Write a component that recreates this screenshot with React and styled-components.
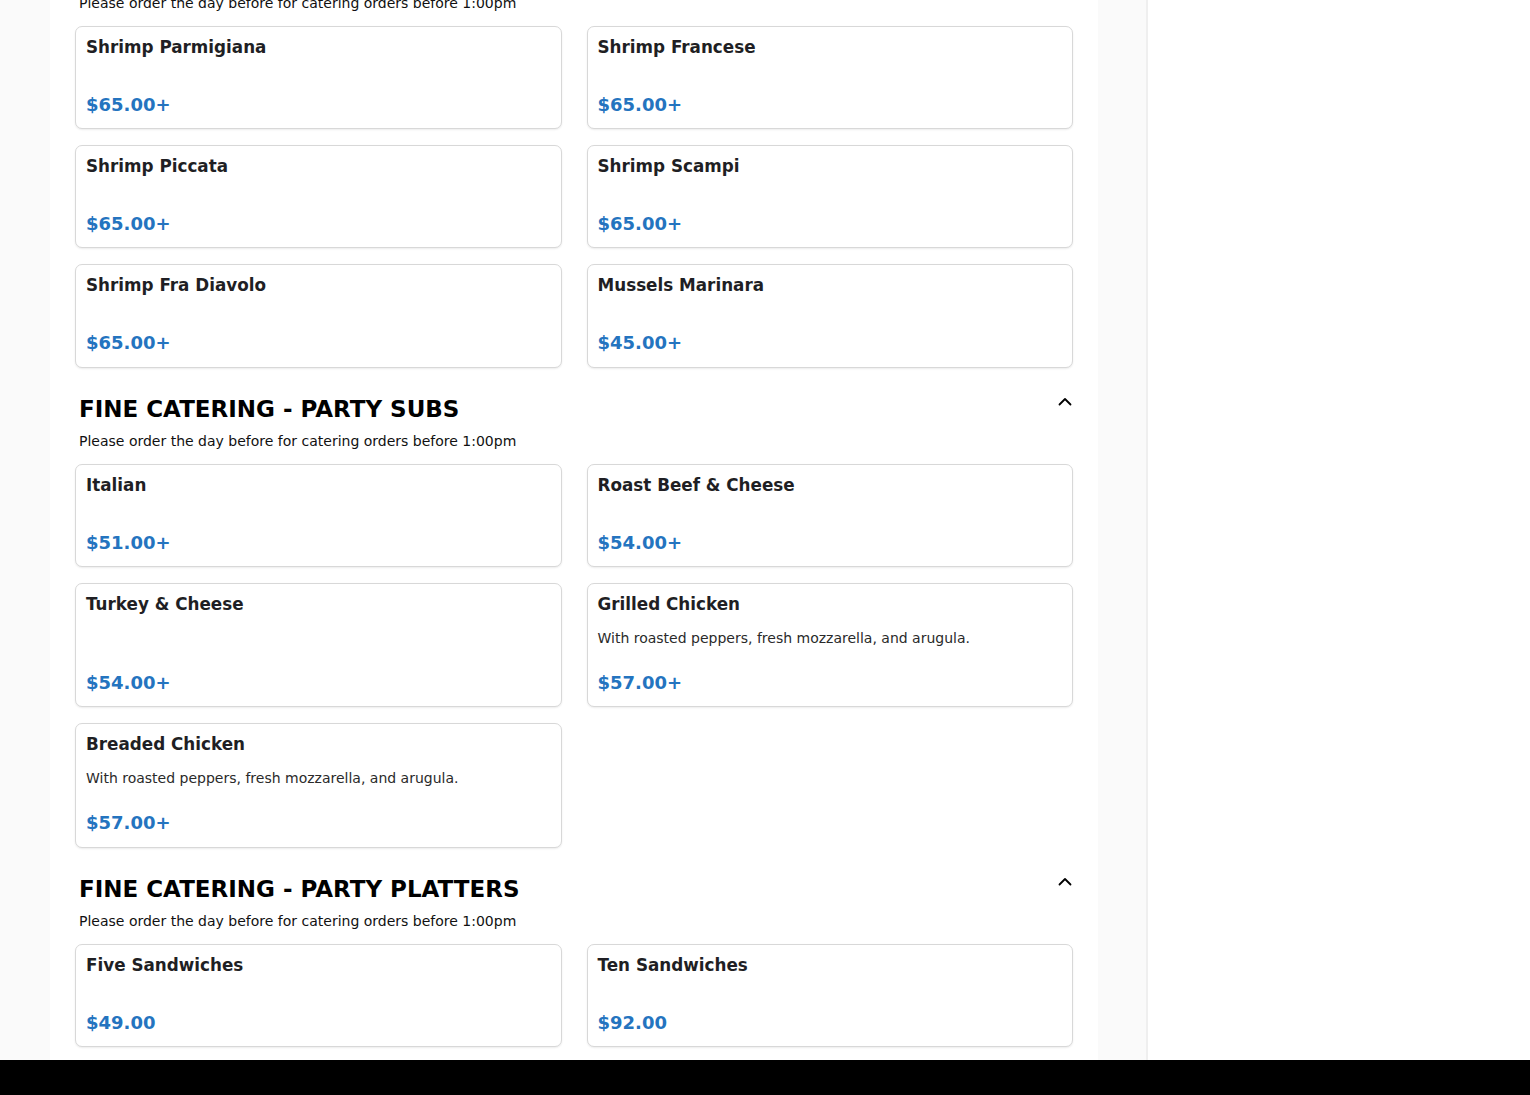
import styled, { createGlobalStyle } from 'styled-components';

const GlobalStyle = createGlobalStyle`
    * { box-sizing: border-box; }
    html, body {
        margin: 0;
        padding: 0;
        background: #fafafa;
        font-family: "DejaVu Sans", "Noto Sans", sans-serif;
        overflow: hidden;
    }
`;

const sections = [
    {
        title: 'FINE CATERING - SEAFOOD',
        hidden: true,
        items: [
            { name: 'Shrimp Parmigiana', price: '$65.00+' },
            { name: 'Shrimp Francese', price: '$65.00+' },
            { name: 'Shrimp Piccata', price: '$65.00+' },
            { name: 'Shrimp Scampi', price: '$65.00+' },
            { name: 'Shrimp Fra Diavolo', price: '$65.00+' },
            { name: 'Mussels Marinara', price: '$45.00+' },
        ],
    },
    {
        title: 'FINE CATERING - PARTY SUBS',
        items: [
            { name: 'Italian', price: '$51.00+' },
            { name: 'Roast Beef & Cheese', price: '$54.00+' },
            { name: 'Turkey & Cheese', price: '$54.00+' },
            { name: 'Grilled Chicken', desc: 'With roasted peppers, fresh mozzarella, and arugula.', price: '$57.00+' },
            { name: 'Breaded Chicken', desc: 'With roasted peppers, fresh mozzarella, and arugula.', price: '$57.00+' },
        ],
    },
    {
        title: 'FINE CATERING - PARTY PLATTERS',
        items: [
            { name: 'Five Sandwiches', price: '$49.00' },
            { name: 'Ten Sandwiches', price: '$92.00' },
        ],
    },
];

function Chevron() {
    return (
        <svg width="16" height="16" viewBox="0 0 16 16" fill="none">
            <path d="M2.5 10.5 L8 5 L13.5 10.5" stroke="#000" strokeWidth="1.8" strokeLinecap="round" strokeLinejoin="round" />
        </svg>
    );
}

function App() {
    return (
        <>
            <GlobalStyle />
            <Screen>
                <Page>
                    <Main>
                        <Content>
                            {sections.map((s) => (
                                <Section key={s.title}>
                                    {!s.hidden && (
                                        <SectionHead>
                                            <SectionTitle>{s.title}</SectionTitle>
                                            <Toggle><Chevron /></Toggle>
                                        </SectionHead>
                                    )}
                                    <Note $first={s.hidden}>Please order the day before for catering orders before 1:00pm</Note>
                                    <Grid>
                                        {s.items.map((it) => (
                                            <Card key={it.name}>
                                                <ItemName>{it.name}</ItemName>
                                                <ItemDesc>{it.desc}</ItemDesc>
                                                <Price>{it.price}</Price>
                                            </Card>
                                        ))}
                                    </Grid>
                                </Section>
                            ))}
                        </Content>
                    </Main>
                    <Gutter />
                    <Sidebar />
                </Page>
                <Footer />
            </Screen>
        </>
    );
}

export default App;

const Screen = styled.div`
    display: flex;
    flex-direction: column;
    height: 1095px;
    overflow: hidden;
`;

const Page = styled.div`
    display: flex;
    flex: 1;
    min-height: 0;
    overflow: hidden;
    padding-left: 50px;
    background: #fafafa;
`;

const Main = styled.div`
    width: 1048px;
    background: #ffffff;
    overflow: hidden;
`;

const Content = styled.div`
    padding: 0 25px;
`;

const Gutter = styled.div`
    width: 48px;
    background: #fafafa;
`;

const Sidebar = styled.div`
    flex: 1;
    background: #ffffff;
    border-left: 2px solid #efefef;
`;

const Footer = styled.div`
    height: 35px;
    background: #000000;
`;

const Section = styled.div`
    & + & {
        margin-top: 25px;
    }
`;

const SectionHead = styled.div`
    display: flex;
    align-items: flex-start;
    justify-content: space-between;
    padding: 0 0 0 4px;
`;

const SectionTitle = styled.h2`
    margin: 0;
    font-size: 23px;
    line-height: 32px;
    font-weight: 700;
    color: #000;
`;

const Toggle = styled.div`
    display: flex;
    margin-top: 1px;
`;

const Note = styled.p`
    margin: ${(p) => (p.$first ? '-7.5px' : '6px')} 0 12.5px;
    padding-left: 4px;
    font-size: 14px;
    line-height: 21px;
    color: #111;
`;

const Grid = styled.div`
    display: grid;
    grid-template-columns: 1fr 1fr;
    column-gap: 25px;
    row-gap: 16px;
`;

const Card = styled.div`
    display: flex;
    flex-direction: column;
    border: 1px solid #d8d8d8;
    border-radius: 7px;
    box-shadow: 0 1px 2px rgba(0, 0, 0, 0.08);
    padding: 10px 10px 13px;
    background: #fff;
`;

const ItemName = styled.div`
    font-size: 16.8px;
    line-height: 21.6px;
    font-weight: 700;
    color: #1f1f24;
`;

const ItemDesc = styled.div`
    margin: 12px 0 23px;
    font-size: 14px;
    line-height: 21px;
    color: #2a2a2a;
`;

const Price = styled.div`
    margin-top: auto;
    font-size: 18px;
    line-height: 21.6px;
    font-weight: 700;
    color: #2474bf;
`;
